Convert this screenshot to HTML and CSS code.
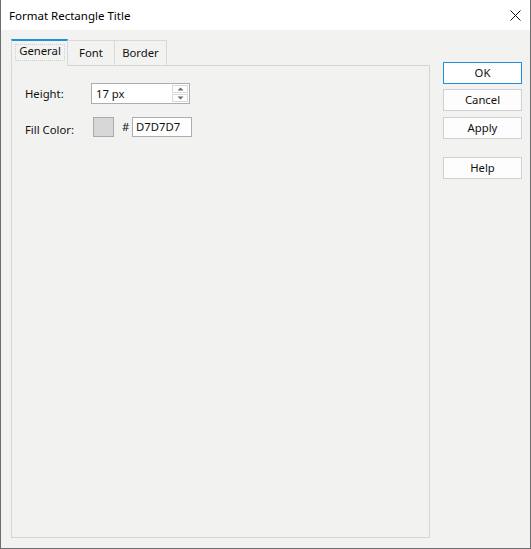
FILE: index.html
```html
<!DOCTYPE html>
<html>
<head>
<meta charset="utf-8">
<link rel="stylesheet" href="styles.css">
</head>
<body>
<div class="window">
  <div class="titlebar">
    <span class="title">Format Rectangle Title</span>
    <svg class="close" width="11" height="11" viewBox="0 0 11 11"><path d="M0.5 0.5 L10.5 10.5 M10.5 0.5 L0.5 10.5" stroke="#111" stroke-width="1" fill="none"/></svg>
  </div>
  <div class="body">
    <div class="tabcol">
      <div class="tabs">
        <div class="tab active"><span class="focus">General</span></div>
        <div class="tab">Font</div>
        <div class="tab">Border</div>
      </div>
      <div class="panel">
        <div class="row row1">
          <span class="label">Height:</span>
          <div class="spin">
            <span class="val">17 px</span>
            <div class="spinbtns">
              <div class="sb"><svg width="7" height="4" viewBox="0 0 7 4"><path d="M0.5 3.5 L3.5 0.5 L6.5 3.5 Z" fill="#6a6a6a"/></svg></div>
              <div class="sb"><svg width="7" height="4" viewBox="0 0 7 4"><path d="M0.5 0.5 L3.5 3.5 L6.5 0.5 Z" fill="#6a6a6a"/></svg></div>
            </div>
          </div>
        </div>
        <div class="row row2">
          <span class="label lower">Fill Color:</span>
          <span class="swatch"></span>
          <span class="hash">#</span>
          <span class="hex">D7D7D7</span>
        </div>
      </div>
    </div>
    <div class="buttons">
      <div class="btn default">OK</div>
      <div class="btn">Cancel</div>
      <div class="btn">Apply</div>
      <div class="btn help">Help</div>
    </div>
  </div>
</div>
</body>
</html>
```
FILE: styles.css
```css
html, body {
  margin: 0;
  padding: 0;
  background: #f2f3f0;
}
.window {
  width: 531px;
  height: 549px;
  box-sizing: border-box;
  border-left: 1px solid #6e6e6e;
  border-right: 1px solid #6e6e6e;
  border-bottom: 1px solid #6e6e6e;
  background: #f2f3f0;
  font-family: "Noto Sans", "Segoe UI", sans-serif;
  font-size: 11.3px;
  color: #111;
  display: flex;
  flex-direction: column;
}
.titlebar {
  height: 30px;
  background: #ffffff;
  display: flex;
  align-items: center;
  justify-content: space-between;
  padding-left: 8px;
  padding-right: 9px;
}
.title {
  font-size: 11.5px;
  color: #000;
  margin-top: 1px;
}
.close {
  display: block;
  margin-top: 1px;
}
.body {
  display: flex;
  padding: 9px 0 0 10px;
}
.tabcol {
  width: 419px;
  display: flex;
  flex-direction: column;
}
.tabs {
  display: flex;
  height: 26px;
  align-items: flex-end;
}
.tab {
  box-sizing: border-box;
  height: 25px;
  border: 1px solid #d9d9d9;
  border-bottom: none;
  border-left: none;
  display: flex;
  align-items: center;
  justify-content: center;
  padding-bottom: 1px;
}
.tab:nth-child(2) { width: 47px; }
.tab:nth-child(3) { width: 52px; }
.tab.active {
  width: 57px;
  height: 27px;
  margin-bottom: -1px;
  border-left: 1px solid #d9d9d9;
  border-right: 1px solid #d9d9d9;
  border-top: 2px solid #1e8fd8;
  background: #f2f3f0;
  position: relative;
  z-index: 1;
  align-items: flex-start;
  padding: 3px 1px 0 3px;
  justify-content: flex-start;
}
.focus {
  display: block;
  width: 50px;
  height: 17px;
  box-sizing: border-box;
  border: 1px dotted #c8d0d0;
  text-align: center;
  line-height: 12px;
}
.panel {
  box-sizing: border-box;
  height: 473px;
  border: 1px solid #d5d5d5;
  background: #f2f3f0;
  padding: 17px 0 0 13px;
}
.row {
  display: flex;
  align-items: center;
}
.label {
  width: 66px;
}
.lower {
  margin-top: 6px;
}
.spin {
  box-sizing: border-box;
  width: 99px;
  height: 21px;
  border: 1px solid #adadad;
  background: #fff;
  display: flex;
  align-items: center;
  justify-content: space-between;
  padding-left: 4px;
}
.spinbtns {
  display: flex;
  flex-direction: column;
  gap: 1px;
  margin-right: 1px;
}
.sb {
  box-sizing: border-box;
  width: 16px;
  height: 8px;
  border: 1px solid #d9d9d9;
  display: flex;
  align-items: center;
  justify-content: center;
}
.sb svg { display: block; }
.row2 {
  margin-top: 12px;
}
.swatch {
  box-sizing: border-box;
  width: 21px;
  height: 20px;
  border: 1px solid #aaaaaa;
  background: #d7d7d7;
  margin-left: 2px;
}
.hash {
  margin-left: 8px;
  width: 10px;
}
.hex {
  box-sizing: border-box;
  width: 60px;
  height: 20px;
  border: 1px solid #adadad;
  background: #fff;
  padding-left: 3px;
  line-height: 18px;
}
.buttons {
  display: flex;
  flex-direction: column;
  margin-left: 13px;
  padding-top: 23px;
}
.btn {
  box-sizing: border-box;
  width: 79px;
  height: 22px;
  border: 1px solid #d0d0d0;
  background: #fdfdfd;
  display: flex;
  align-items: center;
  justify-content: center;
  margin-bottom: 6px;
  padding-bottom: 1px;
}
.btn.default {
  border: 1px solid #1e8fd8;
  background: #fff;
  margin-bottom: 5px;
}
.btn.help {
  margin-top: 12px;
}
```
